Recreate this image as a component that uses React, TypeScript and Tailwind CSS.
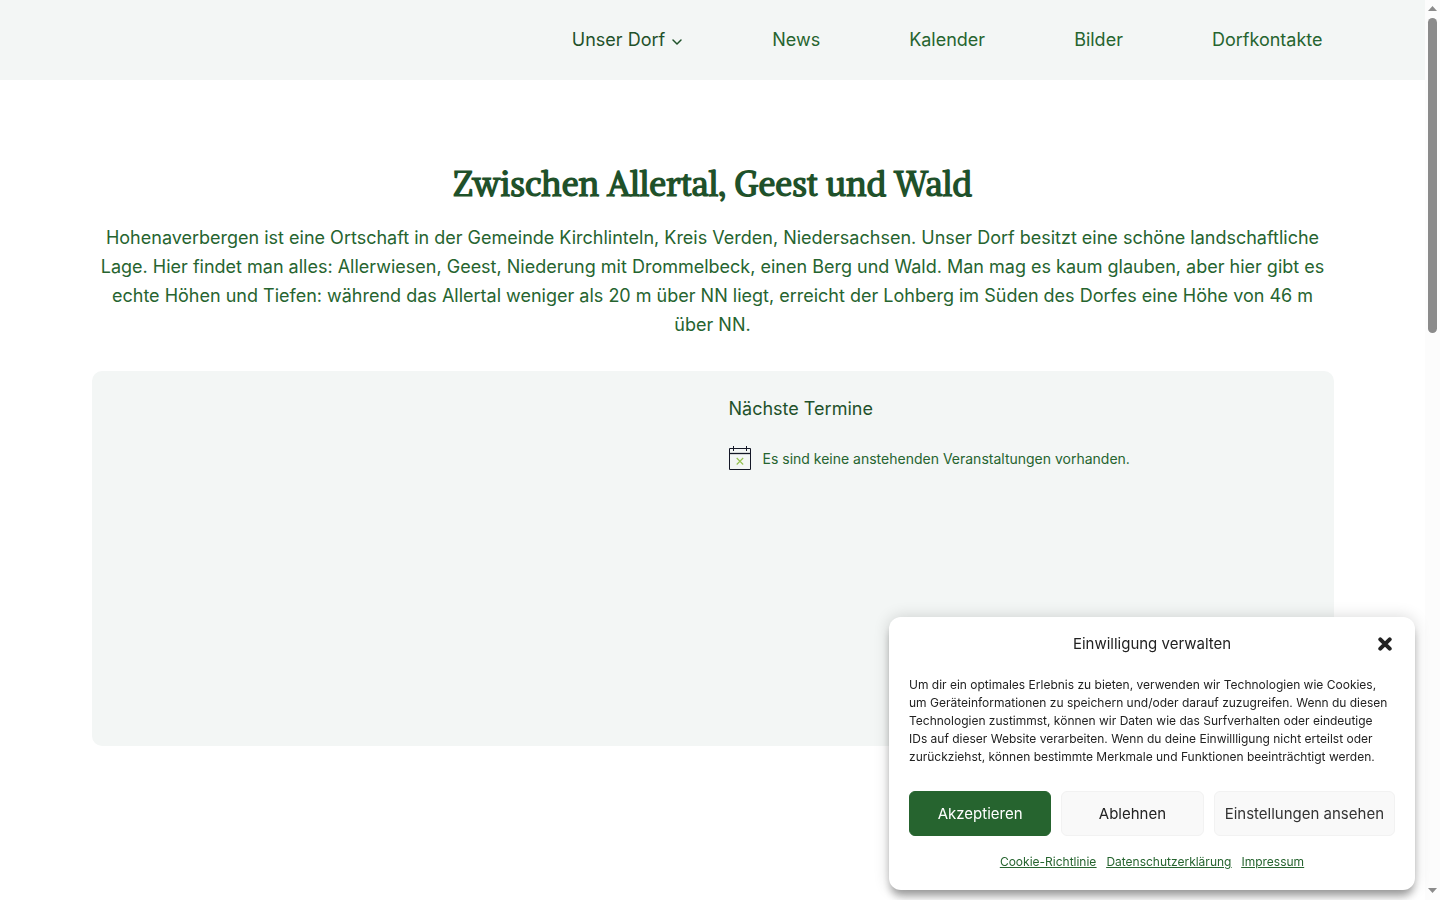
import { useState } from "react";

const navItems = ["News", "Kalender", "Bilder", "Dorfkontakte"];

const legalLinks = ["Cookie-Richtlinie", "Datenschutzerklärung", "Impressum"];

function ChevronDown() {
  return (
    <svg className="h-4 w-4" viewBox="0 0 16 16" fill="none" stroke="currentColor" strokeWidth="1.5" strokeLinecap="round" strokeLinejoin="round" aria-hidden="true">
      <path d="M4 6l4 4 4-4" />
    </svg>
  );
}

function Header() {
  return (
    <header className="bg-[#f3f6f5] px-6">
      <nav className="mx-auto flex h-20 max-w-[1242px] items-center justify-end gap-[89px] pr-[11px] text-lg text-[#26642f]" aria-label="Hauptmenü">
        <a href="#dorf" className="flex items-center gap-1 text-[#1f512a]">
          Unser Dorf
          <span className="-mr-0.5 pt-1">
            <ChevronDown />
          </span>
        </a>
        {navItems.map((item) => (
          <a key={item} href={`#${item.toLowerCase()}`}>
            {item}
          </a>
        ))}
      </nav>
    </header>
  );
}

function CalendarIcon() {
  return (
    <svg className="h-6 w-[22px] shrink-0" viewBox="0 0 22 24" fill="none" aria-hidden="true">
      <path d="M0.5 2.5h21v21h-21z" stroke="#141827" />
      <path d="M0 7.5h22" stroke="#141827" strokeWidth="1.3" />
      <path d="M4.5 0v5M17.5 0v5" stroke="#141827" />
      <path d="M7.7 12l6.5 6.5M14.2 12L7.7 18.5" stroke="#93c04d" strokeWidth="1.1" />
    </svg>
  );
}

function Events() {
  return (
    <section className="grid min-h-[375px] grid-cols-2 gap-8 rounded-[10px] bg-[#f3f6f5] px-6 py-6">
      <div />
      <div>
        <h2 className="text-lg leading-7 text-[#1f512a]">Nächste Termine</h2>
        <div className="mt-[23px] flex items-start gap-3 text-sm text-[#26642f]">
          <CalendarIcon />
          <p className="leading-[26px]">Es sind keine anstehenden Veranstaltungen vorhanden.</p>
        </div>
      </div>
    </section>
  );
}

function ConsentDialog({ onClose }: { onClose: () => void }) {
  return (
    <div
      role="dialog"
      aria-labelledby="consent-title"
      className="fixed right-[25px] bottom-[10px] w-[526px] max-w-full rounded-xl bg-white px-5 pt-[15px] pb-[19px] text-[#222222] shadow-[0_8px_8px_-2px_rgba(0,0,0,0.35),0_0_16px_rgba(0,0,0,0.16)]"
    >
      <div className="grid grid-cols-[20px_1fr_20px] items-center">
        <span />
        <h2 id="consent-title" className="text-center text-[15px] leading-6">
          Einwilligung verwalten
        </h2>
        <button type="button" onClick={onClose} aria-label="Dialog schließen" className="flex h-5 w-5 items-center justify-center">
          <svg className="h-[14px] w-[14px]" viewBox="0 0 14 14" stroke="#222222" strokeWidth="4" strokeLinecap="round" aria-hidden="true">
            <path d="M2.3 2.3l9.4 9.4M11.7 2.3l-9.4 9.4" />
          </svg>
        </button>
      </div>
      <p className="mt-5 pr-1 text-xs leading-[18px]">
        Um dir ein optimales Erlebnis zu bieten, verwenden wir Technologien wie Cookies, um Geräteinformationen zu speichern und/oder darauf zuzugreifen. Wenn du diesen Technologien zustimmst, können wir Daten wie das Surfverhalten oder eindeutige IDs auf dieser Website verarbeiten. Wenn du deine Einwillligung nicht erteilst oder zurückziehst, können bestimmte Merkmale und Funktionen beeinträchtigt werden.
      </p>
      <div className="mt-[25px] flex gap-[10px] text-[15px]">
        <button type="button" onClick={onClose} className="h-[45px] flex-1 rounded-md border border-[#26642f] bg-[#26642f] pt-0.5 text-white">
          Akzeptieren
        </button>
        <button type="button" onClick={onClose} className="h-[45px] flex-1 rounded-md border border-[#f2f2f2] bg-[#f9f9f9] pt-0.5">
          Ablehnen
        </button>
        <button type="button" className="h-[45px] rounded-md border border-[#f2f2f2] bg-[#f9f9f9] px-[10px] pt-0.5 text-[#333333]">
          Einstellungen ansehen
        </button>
      </div>
      <div className="mt-[17px] flex justify-center gap-[10px] text-xs leading-[18px] text-[#26642f] underline">
        {legalLinks.map((link) => (
          <a key={link} href={`#${link.toLowerCase()}`}>
            {link}
          </a>
        ))}
      </div>
    </div>
  );
}

function ScrollTrack() {
  return (
    <div className="sticky top-0 flex h-screen w-[15px] shrink-0 flex-col items-center justify-between bg-[#fcfcfc] pt-[6px] pb-[7px]" aria-hidden="true">
      <div className="flex h-[327px] w-full flex-col items-center gap-[7px]">
        <svg className="h-[5px] w-[9px] shrink-0" viewBox="0 0 9 5" fill="#8b8b8b">
          <path d="M0 5L4.5 0 9 5z" />
        </svg>
        <div className="w-[9px] flex-1 rounded-full bg-[#8b8b8b]" />
      </div>
      <svg className="h-[5px] w-[9px] shrink-0" viewBox="0 0 9 5" fill="#8b8b8b">
        <path d="M0 0L4.5 5 9 0z" />
      </svg>
    </div>
  );
}

export default function App() {
  const [open, setOpen] = useState(true);
  return (
    <div className="flex min-h-screen bg-white font-['Inter',sans-serif]">
      <div className="min-w-0 flex-1">
        <Header />
        <main className="px-6 pt-20">
          <div className="mx-auto max-w-[1242px]">
            <h1 className="text-center font-['Alike','Liberation_Serif',serif] text-[34px] leading-[48px] font-bold text-[#1f512a]">
              Zwischen Allertal, Geest und Wald
            </h1>
            <p className="mt-[15px] mb-8 text-center text-lg leading-[29px] text-[#26642f]">
              Hohenaverbergen ist eine Ortschaft in der Gemeinde Kirchlinteln, Kreis Verden, Niedersachsen. Unser Dorf besitzt eine schöne landschaftliche Lage. Hier findet man alles: Allerwiesen, Geest, Niederung mit Drommelbeck, einen Berg und Wald. Man mag es kaum glauben, aber hier gibt es echte Höhen und Tiefen: während das Allertal weniger als 20 m über NN liegt, erreicht der Lohberg im Süden des Dorfes eine Höhe von 46 m über NN.
            </p>
            <Events />
          </div>
        </main>
      </div>
      <ScrollTrack />
      {open && <ConsentDialog onClose={() => setOpen(false)} />}
    </div>
  );
}
